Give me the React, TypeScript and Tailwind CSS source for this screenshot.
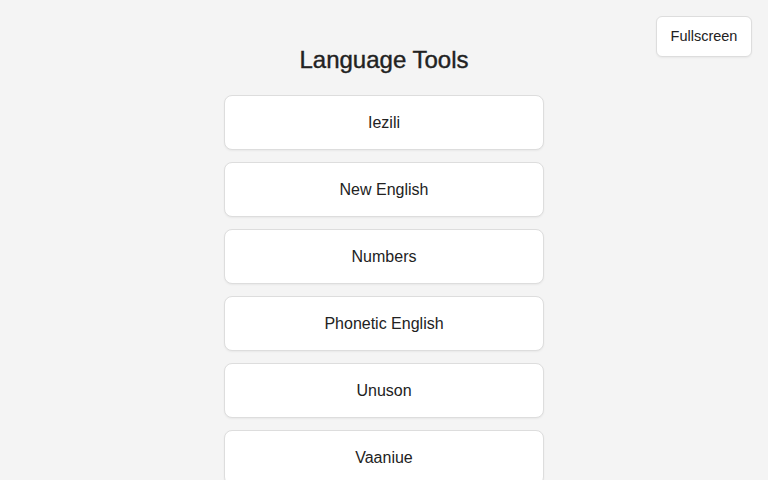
const tools = ['Iezili', 'New English', 'Numbers', 'Phonetic English', 'Unuson', 'Vaaniue'];

export default function App() {
  return (
    <div className="relative min-h-screen bg-[#f4f4f4] font-['Liberation_Sans',Arial,sans-serif] text-[#222]">
      <button className="absolute right-4 top-4 h-[41px] w-[96px] rounded-md border border-[#dddddd] bg-white text-[14.5px] text-[#222] shadow-[0_1px_2px_rgba(0,0,0,0.05)]">
        Fullscreen
      </button>
      <div className="flex flex-col items-center pt-[46px]">
        <h1 className="mb-[21px] h-[28px] text-2xl font-medium leading-7 [-webkit-text-stroke:0.4px_#222]">Language Tools</h1>
        <div className="flex w-[320px] flex-col gap-3">
          {tools.map((name) => (
            <button
              key={name}
              className="h-[55px] w-full rounded-lg border border-[#dddddd] bg-white text-base text-[#222] shadow-[0_1px_2px_rgba(0,0,0,0.05)]"
            >
              {name}
            </button>
          ))}
        </div>
      </div>
    </div>
  );
}
